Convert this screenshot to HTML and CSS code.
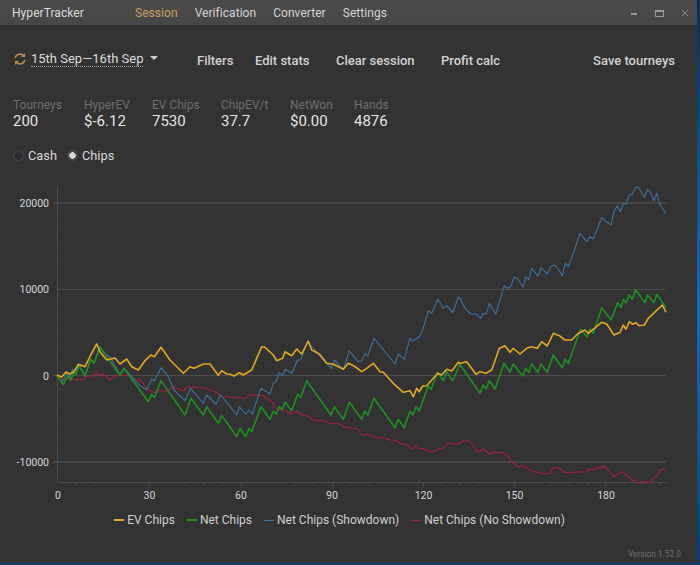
FILE: index.html
```html
<!DOCTYPE html>
<html lang="en">
<head>
<meta charset="utf-8">
<title>HyperTracker</title>
<link rel="stylesheet" href="styles.css">
</head>
<body>
<div class="window">
  <header class="titlebar">
    <span class="brand">HyperTracker</span>
    <nav class="nav">
      <span class="nav-item active">Session</span>
      <span class="nav-item">Verification</span>
      <span class="nav-item">Converter</span>
      <span class="nav-item">Settings</span>
    </nav>
    <div class="controls">
      <svg class="ctl" width="10" height="10" viewBox="0 0 10 10"><path d="M3 6h6" stroke="#9a9a9a" stroke-width="2"/></svg>
      <svg class="ctl" width="10" height="10" viewBox="0 0 10 10"><path d="M1.5 2.500h8v6h-8z" fill="none" stroke="#9a9a9a" stroke-width="1"/><path d="M1 3h9" stroke="#9a9a9a" stroke-width="2"/></svg>
      <svg class="ctl" width="10" height="10" viewBox="0 0 10 10"><path d="M2 2l6 6M8 2l-6 6" stroke="#8a8a8a" stroke-width="1"/></svg>
    </div>
  </header>
  <div class="toolbar">
    <div class="range">
      <svg class="sync" width="14" height="14" viewBox="0 0 14 14"><path d="M2.200 6A5 5 0 0 1 11 4M11.800 8A5 5 0 0 1 3 10" fill="none" stroke="#b98d4f" stroke-width="1.600"/><path d="M12 1v4H8zM2 13V9h4z" fill="#b98d4f"/></svg>
      <span class="range-text">15th Sep—16th Sep</span>
      <span class="caret"></span>
    </div>
    <span class="action filters">Filters</span>
    <span class="action edit">Edit stats</span>
    <span class="action clear">Clear session</span>
    <span class="action profit">Profit calc</span>
    <span class="action save">Save tourneys</span>
  </div>
  <div class="stats">
    <div class="stat s1"><span class="stat-label">Tourneys</span><span class="stat-value">200</span></div>
    <div class="stat s2"><span class="stat-label">HyperEV</span><span class="stat-value">$-6.12</span></div>
    <div class="stat s3"><span class="stat-label">EV Chips</span><span class="stat-value">7530</span></div>
    <div class="stat s4"><span class="stat-label">ChipEV/t</span><span class="stat-value">37.7</span></div>
    <div class="stat s5"><span class="stat-label">NetWon</span><span class="stat-value">$0.00</span></div>
    <div class="stat"><span class="stat-label">Hands</span><span class="stat-value">4876</span></div>
  </div>
  <div class="radios">
    <span class="radio"><span class="dot"></span>Cash</span>
    <span class="radio on"><span class="dot"></span>Chips</span>
  </div>
  <svg class="chart" width="697" height="340" viewBox="0 170 697 340">
    <g class="grid">
      <path class="g-thick" d="M53 203H666"/>
      <path d="M58 289.500H666"/>
      <path d="M53 375.500H666"/>
      <path class="g-thick" d="M53 462H666"/>
      <path d="M57.500 186V482.500H666"/>
      <path class="tick" d="M56 221h1.500M56 238h1.500M56 255h1.500M56 272h1.500M56 307h1.500M56 324h1.500M56 341h1.500M56 358h1.500M56 393h1.500M56 410h1.500M56 427h1.500M56 445h1.500M56 479h1.500"/>
      <path class="tick" d="M75.500 483v2M94 483v2M112 483v2M131 483v2M149.500 483v4M168 483v2M186 483v2M204 483v2M222 483v2M241 483v4M259 483v2M277 483v2M295 483v2M314 483v2M332.500 483v4M350 483v2M369 483v2M387 483v2M405 483v2M423.500 483v4M442 483v2M460 483v2M478 483v2M496 483v2M514.500 483v4M533 483v2M551 483v2M569 483v2M588 483v2M606 483v4M624 483v2M642 483v2M660 483v2"/>
    </g>
    <g class="ylabels">
      <text x="49" y="207">20000</text>
      <text x="49" y="293">10000</text>
      <text x="49" y="380">0</text>
      <text x="49" y="466">-10000</text>
    </g>
    <g class="xlabels">
      <text x="58" y="499">0</text>
      <text x="149.500" y="499">30</text>
      <text x="241" y="499">60</text>
      <text x="332" y="499">90</text>
      <text x="423.500" y="499">120</text>
      <text x="514.500" y="499">150</text>
      <text x="606" y="499">180</text>
    </g>
    <polyline class="line red" points="57.3,375.3 63.3,380 70,378.3 76.7,380 83.3,379.3 87.3,376 93.3,376 96.7,372.7 99.3,375.3 103.300,374 110,380 115,376 128.300,375.300 133,378 141.700,381.700 148.300,390 155,392.700 160,390 165,391.700 173.300,386.700 183.300,391 188.300,386.700 206.700,388.300 215,391.700 221.700,396.700 230,397.300 245.700,398.300 249,395 253,394.500 263.300,395.700 273.300,403.300 276.700,410 285,410 291,414 296.700,411 303.300,416 306.700,415.500 313.300,420 318.300,421 323,420 330,423.300 340,424 345,427.300 358.300,429 361.700,435 368.300,434.300 373.300,437 385,438.300 390,440 396.700,440.700 401.700,444.300 406.700,445 412.700,449 416,445 419.300,449 422.700,448.300 426.700,450.700 433.300,451.700 438.300,449 443.300,448.300 447.300,442.700 454,444.300 460,443.300 464.300,440 470.700,442.300 477.300,451.700 483.300,449 490,454.300 495,451.700 498.300,453.300 502.300,452.300 508.300,456.700 511.700,462.300 518.300,466.700 523.300,465.700 531.700,470.700 545,474 550,473.300 553.300,467.300 559.300,468.300 565,472.700 571.700,472.300 586.700,471.700 590,469 593.300,470 603.300,466 608.300,470 614,476.700 621.700,471.700 626.700,475 632.300,480.700 635,480 638,483.300 641.700,481.700 650,482.300 654,477.300 656.700,476.700 660,470 663.300,469.300 665.700,470.300"/>
    <polyline class="line blue" points="57.3,376.7 62.3,381.7 66.7,373.3 70,377.3 72.700,369.300 75,371.700 79,365 85,375 90.700,359.300 94,363.300 99.300,346.700 105,354 110,356.700 120,375 124,368.300 133.300,378.300 140,385.700 146.700,390 151.700,379 154.300,381 161,367.700 168.300,376.700 174,390 185,400.700 190.700,388.300 203.300,403.300 206.700,395 216,404.300 220.700,395 230,406.700 236.700,415 239.300,406.700 245.700,414 249,410 252.300,414 261,388.300 270,394 273.300,383.300 276,381.700 279.300,372.700 282.700,375.700 285.300,369.300 291.700,373.300 297.700,360 300.700,360 307.300,341.700 319.300,355 331,368.300 334.300,360 343.300,369.300 349.300,351 358.300,361.700 361.700,360.700 365,353.300 367.700,356 374,338.300 395,364 398.300,354 404.300,359.300 410,338.300 412.500,341 419,336.700 422.700,330 428.300,310.700 431.700,313.300 437.700,299.300 443.300,308.300 446.700,305.700 452.700,312.700 458.300,296.700 460,298.300 465,308.300 471,314 476,314 480.700,318.300 483.300,313.300 486,314.300 489.300,303.300 495.700,314 504.300,285.700 507.700,288.300 511,286 514,277.300 517.300,278.300 523,287.300 525.700,276.700 528.700,279.300 531.700,268.300 538,276 541,267.700 547.300,274 550.700,266.700 553.300,265 556.700,266.700 562.300,275.700 565.300,263.300 568.300,266.700 575,248.300 580,233.300 586.700,241.700 590,236.700 593.300,239 601.700,217.700 605,220.700 611,225 614.300,210.700 617.300,206 620.300,211.700 623.300,203.300 626,204 629.300,195 632.300,194 635.700,187.300 638.300,187.300 644.300,197.300 647.700,189.300 650.700,192.700 654,200.700 656.700,193.300 660,205 665.700,213.300"/>
    <polyline class="line green" points="57.3,376.7 63.3,384.3 68.3,375 70.7,380.700 74,371.700 76,375 79,366 85,376 90.700,359.300 94,363.300 100,347.300 120,375.300 124,368.300 148.300,401.700 151.700,394 154.300,397.700 161,380.700 185,415 191,398.300 203.300,415 206.700,406.700 218.300,423.300 221.700,415.700 230,427 236.700,436.700 240,428.300 245.700,436.700 249,428.300 251.700,431.700 261,406.700 270,419.300 273.300,411 276,414.300 279.300,406.700 282,409.300 285.300,402.300 291.700,410.700 297.700,394 300.700,397.700 306.700,380.700 331,415 334.300,406.700 343.300,419.300 349.300,402.300 361.700,419.300 364.700,411 367.700,415 374,398.300 395,427.700 398.300,419.300 404.300,427.700 410,411 412.700,415 416,406.700 419.300,410.700 428.300,385.700 431,389.300 437.700,372.300 443.300,380.700 446.700,371.700 452.700,380.700 460,364.500 480,393.300 483.300,385 486,389 489.300,380.700 495,389 504,363.300 510,372.300 513.300,364 522.700,376 525.700,368.300 528.700,372.300 531.700,364 537.700,372.300 541,364 547.300,372.300 553.300,355 562.300,367.700 565.300,359.300 568.300,363.300 576.700,340 580.700,329.300 586.700,336.700 590,329 593.300,333.300 601.700,307.700 611,320 617.700,302.700 621,307.300 623.300,299.300 626,302.700 629.300,295 632.300,299.300 635.700,290 645,302.700 647.700,295 654,302.700 656.700,294.300 665.700,307.300"/>
    <polyline class="line yellow" points="57.5,375.3 61.7,377 66,372 70,374 74,371.700 78.300,364.300 85,366.700 90.700,355 96.700,344 100,351.700 106.700,360 115,358 120,364 126.700,359 131.700,366.700 138.300,370 145,360.700 151,355 154.300,356.700 161,347.300 170,360 183.300,373.300 190,366.700 194,368.300 203.300,364 210,364 218.300,375.300 221.700,370.700 226.700,374 230,374.300 234,376 239.300,372.700 243.300,375 251.700,370 261.700,346.700 265,347.300 273.300,355 276.700,360.700 282.700,358.300 285,351.700 291.700,355.700 296.700,349 301.700,354 308.300,341 311.700,350 319.300,354 326.700,363.300 333.300,364.300 343.300,369.300 348.300,363.300 354,366 361.700,371.700 366.700,368.300 373.300,363.300 380,371.700 383.300,372.300 393.300,383.300 403.300,392.300 410,390.700 413.300,396.700 416.700,388.300 419.300,391.700 422.700,386 426.700,385.700 437.700,373.300 441.700,375 446.700,369.300 451.700,371 458.300,362.300 460,363.300 466.700,361.700 476,374.300 480,371.700 486,373.300 491.700,370 499.300,348.300 505,345.700 510,352.300 513.300,348.300 520,354 526.700,348.300 531,346.700 537.300,348.300 541.700,341.700 547.300,346 553.300,333.300 559.300,335.700 565,340 571.700,340 578.300,333.300 585,330 588.300,333.300 601.700,322.300 606.700,324 614,335 620,332.300 623.300,325 626,329.300 629.300,321.700 632.700,324.300 635.700,322.700 639,325.700 644.300,325 648.300,318.300 662.300,305 665.700,311.700"/>
  </svg>
  <div class="legend">
    <span class="key"><i class="swatch sw-yellow"></i>EV Chips</span>
    <span class="key"><i class="swatch sw-green"></i>Net Chips</span>
    <span class="key"><i class="swatch sw-blue"></i>Net Chips (Showdown)</span>
    <span class="key"><i class="swatch sw-red"></i>Net Chips (No Showdown)</span>
  </div>
  <div class="version">Version 1.52.0</div>
</div>
</body>
</html>
```
FILE: styles.css
```css
* { box-sizing: border-box; }
html, body { margin: 0; height: 100%; }
body {
  width: 700px;
  height: 565px;
  overflow: hidden;
  background: linear-gradient(#0b2f52, #0f6fc0 55%, #0b3d6b);
  font-family: Roboto, "Liberation Sans", sans-serif;
  color: #d8d8d8;
}
.window {
  width: 697px;
  height: 563px;
  background: #333333;
  display: flex;
  flex-direction: column;
}
.titlebar {
  height: 25px;
  flex: none;
  background: linear-gradient(#4b4b4b, #474747);
  display: flex;
  align-items: center;
  padding-left: 12px;
  font-size: 12px;
  letter-spacing: 0.05px;
}
.brand { width: 123px; color: #dcdcdc; }
.nav { display: flex; gap: 17px; }
.nav-item { color: #d4d4d4; }
.nav-item.active { color: #c9a163; }
.controls { margin-left: auto; display: flex; gap: 16px; padding: 1px 7px 0 0; }
.ctl { display: block; }
.toolbar {
  height: 67px;
  flex: none;
  display: flex;
  align-items: center;
  padding: 0 22px 0 13px;
  font-size: 13px;
  color: #dadada;
}
.range { display: flex; align-items: center; width: 184px; }
.sync { margin-right: 4px; margin-top: 1px; }
.range-text {
  border-bottom: 1px dotted #a0a0a0;
  line-height: 14px;
  margin-top: 1px;
}
.caret {
  margin-left: 7px;
  margin-top: -1px;
  border-left: 4px solid transparent;
  border-right: 4px solid transparent;
  border-top: 4px solid #cfcfcf;
}
.action { white-space: nowrap; font-weight: 500; color: #d2d2d2; margin-top: 3px; }
.filters { width: 58px; }
.edit { width: 81px; }
.clear { width: 105px; }
.save { margin-left: auto; }
.stats {
  display: flex;
  padding: 6px 0 0 13px;
  flex: none;
  height: 43px;
}
.stat { display: flex; flex-direction: column; }
.s1 { width: 71px; }
.s2 { width: 68px; }
.s3 { width: 69px; }
.s4 { width: 69px; }
.s5 { width: 64px; }
.stat-label { font-size: 12px; line-height: 14px; color: #6e6e6e; }
.stat-value { font-size: 15px; line-height: 19px; color: #e4e4e4; }
.radios {
  display: flex;
  gap: 10px;
  padding: 13px 0 0 13px;
  height: 35px;
  flex: none;
  font-size: 12.800px;
  color: #d8d8d8;
}
.radio { display: flex; align-items: center; height: 15px; gap: 4px; }
.dot {
  width: 11px;
  height: 11px;
  border-radius: 50%;
  border: 1px solid #4a4a4a;
  background: #2e2e2e;
  flex: none;
}
.on .dot { background: radial-gradient(circle, #d8d8d8 0 3px, #444 3.500px); }
.chart { display: block; flex: none; }
.grid path { fill: none; stroke: #4c4c4c; stroke-width: 1; }
.grid .g-thick { stroke: #454545; stroke-width: 2; }
.grid .tick { stroke: #4c4c4c; }
.ylabels text { font-size: 10.500px; fill: #d4d8dc; text-anchor: end; }
.xlabels text { font-size: 10.500px; fill: #d4d8dc; text-anchor: middle; }
.line { fill: none; stroke-linejoin: round; stroke-linecap: round; }
.yellow { stroke: #e1a920; stroke-width: 1.600; }
.green { stroke: #1f8f24; stroke-width: 1.600; }
.blue { stroke: #3f719c; stroke-width: 1.100; }
.red { stroke: #a81f41; stroke-width: 1.100; }
.legend {
  display: flex;
  justify-content: center;
  gap: 12px;
  margin-top: 3px;
  padding-right: 18px;
  font-size: 12px;
  line-height: 14px;
  color: #d0d0d0;
}
.key { display: flex; align-items: center; gap: 3px; }
.swatch { width: 10px; height: 2px; display: block; }
.sw-yellow { background: #e1a920; }
.sw-green { background: #1f8f24; }
.sw-blue { background: #3f719c; height: 1px; }
.sw-red { background: #a81f41; height: 1px; }
.version {
  margin-top: auto;
  padding: 0 16px 4px 0;
  text-align: right;
  font-size: 8.300px;
  color: #6e6e6e;
}
```
